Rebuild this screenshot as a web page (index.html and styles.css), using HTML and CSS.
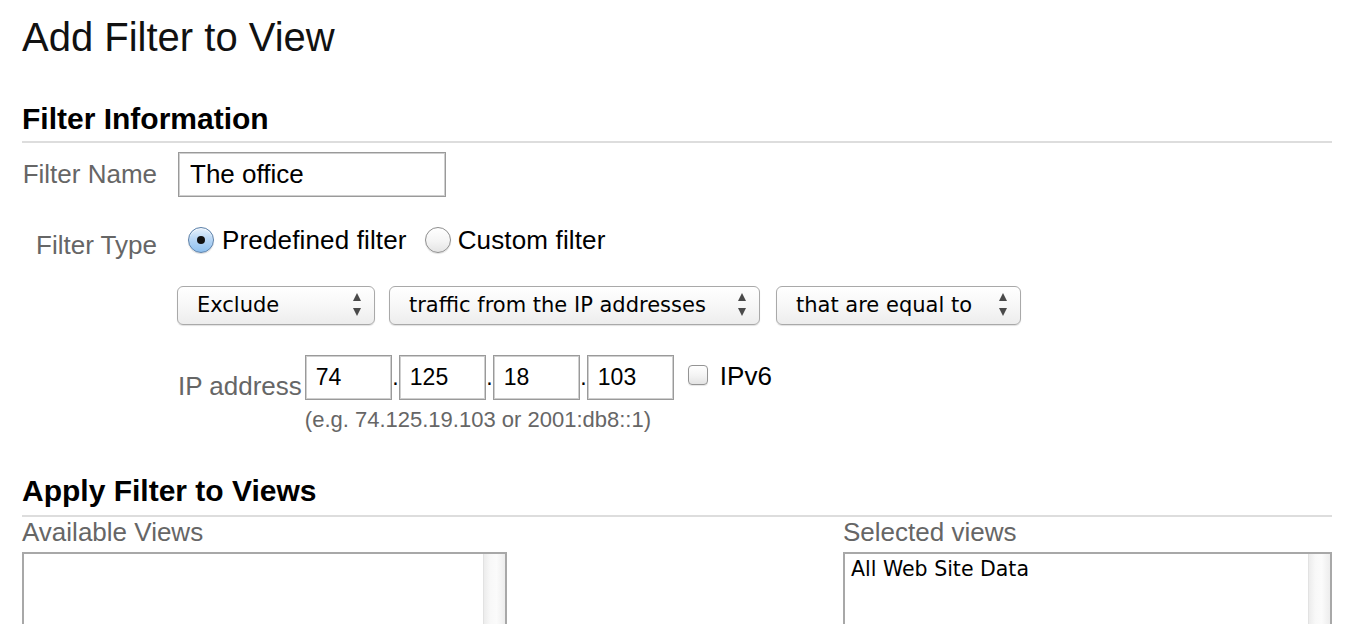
FILE: index.html
```html
<!DOCTYPE html>
<html lang="en">
<head>
<meta charset="utf-8">
<title>Add Filter to View</title>
<link rel="stylesheet" href="styles.css">
</head>
<body>
<div class="page">
  <h1 class="title">Add Filter to View</h1>

  <h2 class="section">Filter Information</h2>

  <div class="row row-name">
    <label class="field-label">Filter Name</label>
    <input class="text-input name-input" type="text" value="The office" readonly>
  </div>

  <div class="row row-type">
    <span class="field-label type-label">Filter Type</span>
    <div class="radio-group">
      <span class="radio radio-on"><span class="radio-dot"></span></span>
      <span class="radio-text">Predefined filter</span>
      <span class="radio radio-off"></span>
      <span class="radio-text">Custom filter</span>
    </div>
  </div>

  <div class="row row-selects">
    <div class="select sel-1"><span>Exclude</span><svg class="arrows" width="8" height="24" viewBox="0 0 8 24"><polygon points="4,0 8,8 0,8"/><polygon points="0,15 8,15 4,23"/></svg></div>
    <div class="select sel-2"><span>traffic from the IP addresses</span><svg class="arrows" width="8" height="24" viewBox="0 0 8 24"><polygon points="4,0 8,8 0,8"/><polygon points="0,15 8,15 4,23"/></svg></div>
    <div class="select sel-3"><span>that are equal to</span><svg class="arrows" width="8" height="24" viewBox="0 0 8 24"><polygon points="4,0 8,8 0,8"/><polygon points="0,15 8,15 4,23"/></svg></div>
  </div>

  <div class="row row-ip">
    <span class="ip-label">IP address</span>
    <div class="ip-fields">
      <div class="ip-inputs">
        <input class="text-input ip-box" type="text" value="74" readonly>
        <span class="ip-dot">.</span>
        <input class="text-input ip-box" type="text" value="125" readonly>
        <span class="ip-dot">.</span>
        <input class="text-input ip-box" type="text" value="18" readonly>
        <span class="ip-dot">.</span>
        <input class="text-input ip-box" type="text" value="103" readonly>
        <span class="checkbox"></span>
        <span class="check-text">IPv6</span>
      </div>
      <div class="hint">(e.g. 74.125.19.103 or 2001:db8::1)</div>
    </div>
  </div>

  <h2 class="section section-views">Apply Filter to Views</h2>

  <div class="views">
    <div class="view-col">
      <div class="views-label">Available Views</div>
      <div class="listbox">
        <div class="list-items"></div>
        <div class="scroll-track"></div>
      </div>
    </div>
    <div class="view-mid"></div>
    <div class="view-col">
      <div class="views-label">Selected views</div>
      <div class="listbox">
        <div class="list-items">
          <div class="list-item">All Web Site Data</div>
        </div>
        <div class="scroll-track"></div>
      </div>
    </div>
  </div>
</div>
</body>
</html>
```

FILE: styles.css
```css
html, body {
  margin: 0;
  padding: 0;
  background: #fff;
  color: #000;
}

.page {
  padding: 0 22px;
  font-family: "Liberation Sans", Arial, Helvetica, sans-serif;
}

.title {
  font-size: 40px;
  line-height: 46px;
  font-weight: normal;
  color: #111;
  margin: 14px 0 0;
}

.section {
  font-size: 30px;
  line-height: 34px;
  font-weight: bold;
  color: #000;
  margin: 42px 0 0;
  padding-bottom: 5px;
  border-bottom: 2px solid #dddddd;
}

.section-views {
  margin-top: 41px;
  padding-bottom: 7px;
}

.row {
  display: flex;
}

.field-label {
  flex: none;
  width: 135px;
  text-align: right;
  font-size: 26px;
  line-height: 30px;
  color: #666;
}

.text-input {
  box-sizing: border-box;
  border: 1px solid #9a9a9a;
  box-shadow: inset 0 0 0 1px #cfcfcf;
  background: #fff;
  font-family: "Liberation Sans", Arial, Helvetica, sans-serif;
  color: #000;
  margin: 0;
  outline: none;
}

/* Filter name */
.row-name {
  margin-top: 9px;
  align-items: baseline;
  gap: 21px;
}

.name-input {
  width: 268px;
  height: 45px;
  padding: 0 11px;
  font-size: 26px;
}

/* Filter type */
.row-type {
  margin-top: 30px;
  align-items: flex-start;
  gap: 31px;
}

.type-label {
  line-height: 26px;
  padding-top: 5px;
}

.radio-group {
  display: flex;
  align-items: center;
  height: 26px;
}

.radio {
  flex: none;
  width: 26px;
  height: 26px;
  box-sizing: border-box;
  border-radius: 50%;
  display: flex;
  align-items: center;
  justify-content: center;
}

.radio-on {
  border: 1px solid #5a7fa8;
  background: linear-gradient(#e6f1fc 0%, #b9d7f5 45%, #8ec0ef 100%);
  box-shadow: inset 0 1px 1px rgba(255, 255, 255, 0.8), 0 1px 1px rgba(0, 0, 0, 0.15);
}

.radio-dot {
  width: 8px;
  height: 8px;
  border-radius: 50%;
  background: #111;
}

.radio-off {
  border: 1px solid #8e8e8e;
  background: linear-gradient(#ffffff 0%, #f4f4f4 55%, #e4e4e4 100%);
  box-shadow: 0 1px 1px rgba(0, 0, 0, 0.12);
}

.radio-text {
  font-size: 26px;
  line-height: 26px;
  letter-spacing: 0.15px;
  margin-left: 8px;
  margin-right: 18px;
  color: #000;
}

.radio-text:last-child {
  margin-left: 7px;
  margin-right: 0;
}

/* Selects */
.row-selects {
  margin-top: 28px;
  margin-left: 155px;
  gap: 14px;
}

.select {
  box-sizing: border-box;
  height: 39px;
  border: 1px solid #a9a9a9;
  border-radius: 6px;
  background: linear-gradient(#ffffff 0%, #f7f7f7 50%, #ededed 100%);
  box-shadow: 0 1px 1px rgba(0, 0, 0, 0.12);
  display: flex;
  align-items: center;
  justify-content: space-between;
  padding: 0 13px 2px 19px;
  font-family: "DejaVu Sans", "Lucida Grande", Verdana, sans-serif;
  font-size: 21px;
  color: #000;
}

.sel-1 { width: 198px; }
.sel-2 { width: 371px; }
.sel-3 { width: 245px; margin-left: 2px; }

.arrows {
  flex: none;
  fill: #4a4a4a;
}

/* IP address */
.row-ip {
  margin-top: 30px;
  margin-left: 156px;
  align-items: flex-start;
}

.ip-label {
  font-size: 26px;
  line-height: 30px;
  padding-top: 16px;
  color: #666;
  margin-right: 3px;
}

.ip-fields {
  display: flex;
  flex-direction: column;
}

.ip-inputs {
  display: flex;
  align-items: baseline;
}

.ip-box {
  width: 87px;
  height: 45px;
  padding: 0 10px;
  font-size: 23px;
}

.ip-dot {
  width: 7px;
  text-align: center;
  font-size: 23px;
  color: #000;
}

.checkbox {
  display: inline-block;
  width: 20px;
  height: 20px;
  box-sizing: border-box;
  margin-left: 14px;
  border: 1px solid #949494;
  border-radius: 4px;
  background: linear-gradient(#ffffff 0%, #f3f3f3 55%, #e3e3e3 100%);
  box-shadow: 0 1px 1px rgba(0, 0, 0, 0.1);
}

.check-text {
  margin-left: 12px;
  font-size: 26px;
  line-height: 30px;
  color: #000;
}

.hint {
  margin-top: 7px;
  font-size: 22px;
  line-height: 26px;
  color: #666;
}

/* Views */
.views {
  display: grid;
  grid-template-columns: 485px 1fr 489px;
  margin-top: 0;
}

.views-label {
  font-size: 26px;
  line-height: 30px;
  color: #666;
}

.listbox {
  margin-top: 5px;
  height: 200px;
  box-sizing: border-box;
  border: 2px solid #a8a8a8;
  display: flex;
  background: #fff;
}

.list-items {
  flex: 1;
  padding: 3px 6px;
}

.list-item {
  font-family: "DejaVu Sans", "Lucida Grande", Verdana, sans-serif;
  font-size: 20.5px;
  line-height: 24px;
  color: #000;
}

.scroll-track {
  flex: none;
  width: 21px;
  border-left: 1px solid #e2e2e2;
  background: linear-gradient(to right, #ececec 0%, #f8f8f8 30%, #fbfbfb 60%, #ededed 100%);
}
```
